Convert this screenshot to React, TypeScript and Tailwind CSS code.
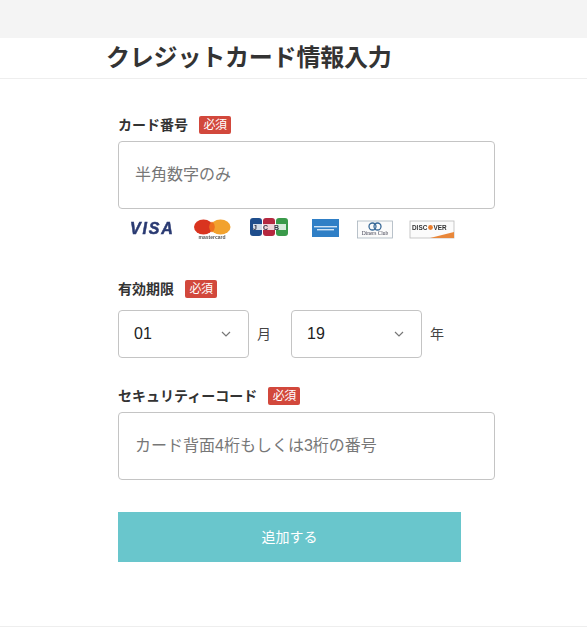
const jp = 'font-["Liberation_Sans","Noto_Sans_CJK_JP",sans-serif]';

function Req() {
  return (
    <span className="ml-[11px] inline-flex h-[18px] w-[32px] items-center justify-center rounded-[2px] bg-[#d2483c] text-[12px] leading-none tracking-[-0.5px] text-white">
      必須
    </span>
  );
}

function Label({ text }: { text: string }) {
  return (
    <div className="flex h-[18px] items-center">
      <span className="text-[14px] font-bold leading-[18px] text-[#333]">{text}</span>
      <Req />
    </div>
  );
}

function Chevron() {
  return (
    <svg width="10" height="6" viewBox="0 0 10 6" fill="none" stroke="#777" strokeWidth="1.2">
      <path d="M1 1l4 4 4-4" />
    </svg>
  );
}

function Select({ value }: { value: string }) {
  return (
    <div className="flex h-[48px] w-[131px] items-center justify-between rounded-[4px] border border-[#c4c4c4] pl-[15px] pr-[17px] text-[16px] text-[#222]">
      <span>{value}</span>
      <Chevron />
    </div>
  );
}

function Logos() {
  return (
    <div className="mt-[9px] flex h-[22px] items-center">
      <svg width="350" height="22" viewBox="0 0 350 22" className="blur-[0.4px]">
        <text x="12" y="15.5" fontFamily="Liberation Sans" fontWeight="700" fontStyle="italic" fontSize="16" letterSpacing="1.8" stroke="#2a3a72" strokeWidth="0.5" fill="#2a3a72">VISA</text>
        <ellipse cx="85.5" cy="9" rx="9.5" ry="7.5" fill="#d9341f" />
        <ellipse cx="102.5" cy="9" rx="10" ry="7.5" fill="#f2a22e" />
        <path d="M94 3.5a9 7.5 0 0 1 0 11a9 7.5 0 0 1 0-11z" fill="#ee6f1f" />
        <text x="94" y="20.5" textAnchor="middle" fontFamily="Liberation Sans" fontWeight="700" fontSize="5" fill="#555">mastercard</text>
        <rect x="132" y="0" width="12" height="18" rx="3" fill="#1f4d8c" />
        <rect x="145" y="0" width="12" height="18" rx="3" fill="#b5283f" />
        <rect x="158" y="0" width="12" height="18" rx="3" fill="#3a9a4a" />
        <rect x="135" y="6" width="33" height="6" fill="#ffffff" opacity="0.8" />
        <text x="151" y="11.5" textAnchor="middle" fontFamily="Liberation Sans" fontWeight="700" fontSize="7" letterSpacing="6" fill="#334">JCB</text>
        <rect x="194" y="1" width="27" height="18" fill="#2f7fc6" />
        <rect x="196" y="8" width="23" height="1.4" fill="#cfe3f5" />
        <rect x="199" y="11" width="17" height="1.4" fill="#cfe3f5" />
        <rect x="239.5" y="3" width="35" height="17" fill="#fbfbfb" stroke="#a9b4bd" strokeWidth="0.8" />
        <circle cx="254.5" cy="8.5" r="3.5" fill="none" stroke="#3a6a98" strokeWidth="1.3" />
        <circle cx="259.5" cy="8.5" r="3.5" fill="none" stroke="#3a6a98" strokeWidth="1.3" />
        <text x="257" y="16.5" textAnchor="middle" fontFamily="Liberation Serif" fontSize="5.5" fill="#445">Diners Club</text>
        <rect x="292" y="3" width="44" height="17" fill="#fbfbfb" stroke="#bbb" strokeWidth="0.8" />
        <path d="M312 20L336 14v6z" fill="#e8873a" />
        <text x="294" y="11.5" fontFamily="Liberation Sans" fontWeight="700" fontSize="6.4" fill="#333">DISC</text>
        <circle cx="312.5" cy="9.5" r="2.4" fill="#ea7d2c" />
        <text x="315.5" y="11.5" fontFamily="Liberation Sans" fontWeight="700" fontSize="6.4" fill="#333">VER</text>
      </svg>
    </div>
  );
}

export default function App() {
  return (
    <div className={`min-h-[627px] w-[587px] overflow-hidden bg-white ${jp}`}>
      <div className="h-[38px] bg-[#f4f4f4]" />
      <div className="flex h-[41px] items-center border-b border-[#eeeeee] pl-[106px]">
        <h1 className="text-[24px] font-bold leading-[38px] tracking-[-0.2px] text-[#333]">クレジットカード情報入力</h1>
      </div>
      <div className="ml-[118px] w-[377px] pt-[37px]">
        <Label text="カード番号" />
        <div className="mt-[7px] flex h-[68px] items-center rounded-[4px] border border-[#c4c4c4] pl-[16px] text-[16px] text-[#777]">
          半角数字のみ
        </div>
        <Logos />
        <div className="mt-[40px]">
          <Label text="有効期限" />
        </div>
        <div className="mt-[12px] flex items-center text-[14px] text-[#444]">
          <Select value="01" />
          <span className="ml-[8px] w-[34px]">月</span>
          <Select value="19" />
          <span className="ml-[8px]">年</span>
        </div>
        <div className="mt-[29px]">
          <Label text="セキュリティーコード" />
        </div>
        <div className="mt-[7px] flex h-[68px] items-center rounded-[4px] border border-[#c4c4c4] pl-[16px] text-[16px] text-[#777]">
          カード背面4桁もしくは3桁の番号
        </div>
        <div className="mt-[32px] flex h-[50px] w-[343px] items-center justify-center bg-[#69c6cc] text-[14px] text-white">
          追加する
        </div>
      </div>
      <div className="mt-[64px] h-px bg-[#eeeeee]" />
    </div>
  );
}
